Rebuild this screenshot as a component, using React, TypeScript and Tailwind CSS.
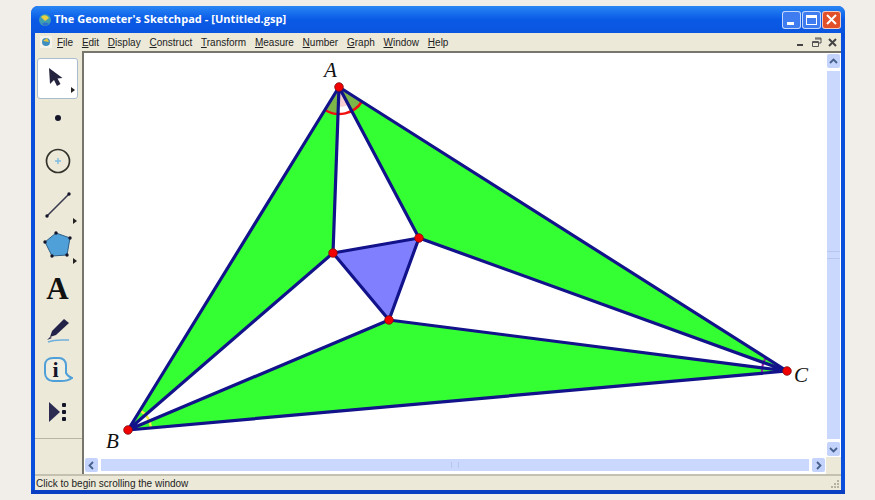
const menus = ["File", "Edit", "Display", "Construct", "Transform", "Measure", "Number", "Graph", "Window", "Help"];

function Triangle() {
  return <span className="absolute right-[1px] bottom-[1px] h-0 w-0 border-y-[3px] border-l-[4px] border-y-transparent border-l-[#222]" />;
}

function Tool({ className, children, more }: { className: string; children: React.ReactNode; more?: boolean }) {
  return (
    <div className={`relative flex w-[41px] items-center justify-center ${className}`}>
      {children}
      {more && <Triangle />}
    </div>
  );
}

function Toolbar() {
  return (
    <div className="flex w-[49px] shrink-0 flex-col items-center border-r-2 border-[#77766c] bg-[#ece9d8] pr-[2px]">
      <div className="relative mt-[7px] flex h-[41px] w-[41px] items-center justify-center rounded-[3px] border border-[#a9bdd0] bg-white">
        <svg className="mt-[-4px] mr-[3px]" width="18" height="22" viewBox="0 0 18 22">
          <path d="M2 2 L3 18 L7 14 L10 20 L13.5 18 L10.5 12.5 L15.5 12 Z" fill="#24243e" />
        </svg>
        <span className="absolute right-[2px] bottom-[5px] h-0 w-0 border-y-[3px] border-l-[4px] border-y-transparent border-l-[#222]" />
      </div>
      <Tool className="h-[38px]">
        <span className="h-[6px] w-[6px] rounded-full bg-[#15152a]" />
      </Tool>
      <Tool className="h-[48px]">
        <svg width="28" height="28" viewBox="0 0 28 28">
          <circle cx="14" cy="14" r="11.5" fill="none" stroke="#33332c" strokeWidth="1.7" />
          <path d="M14 11 V17 M11 14 H17" stroke="#7fbce0" strokeWidth="1.4" />
        </svg>
      </Tool>
      <Tool className="h-[40px]" more>
        <svg width="30" height="30" viewBox="0 0 30 30">
          <path d="M4 26 L26 4" stroke="#3a3a4e" strokeWidth="1.6" />
          <circle cx="4" cy="26" r="1.7" fill="#15152a" />
          <circle cx="26" cy="4" r="1.7" fill="#15152a" />
        </svg>
      </Tool>
      <Tool className="h-[40px]" more>
        <svg width="30" height="30" viewBox="0 0 30 30">
          <path d="M13 3 L27 8 L24 25 L9 26 L2 12 Z" fill="#4f9fd8" stroke="#2f5f88" strokeWidth="1" />
          <g fill="#15152a">
            <circle cx="13" cy="3" r="1.7" />
            <circle cx="27" cy="8" r="1.7" />
            <circle cx="24" cy="25" r="1.7" />
            <circle cx="9" cy="26" r="1.7" />
            <circle cx="2" cy="12" r="1.7" />
          </g>
        </svg>
      </Tool>
      <Tool className="h-[46px]">
        <span className="font-['Liberation_Serif',serif] text-[31px] leading-none font-bold text-[#111]">A</span>
      </Tool>
      <Tool className="h-[38px]">
        <svg width="26" height="26" viewBox="0 0 26 26">
          <path d="M19 2 L24 6 L11 18 L5 20 L7 14 Z" fill="#23234a" />
          <path d="M5 20 L2 23 L7 21 Z" fill="#23234a" />
          <path d="M3 25 C10 22 17 23 24 23" fill="none" stroke="#6fb0dc" strokeWidth="1.5" />
        </svg>
      </Tool>
      <Tool className="h-[44px]">
        <svg width="30" height="30" viewBox="0 0 30 30">
          <path d="M10 2 H16 C20 2 23 5 23 9 V17 C24 19 26 21 29 22 C26 24 22 25 18 25 H10 C5 25 2 21 2 17 V9 C2 5 5 2 10 2 Z" fill="#f0eee0" stroke="#4f9fd8" strokeWidth="2" />
          <text x="12.5" y="21" textAnchor="middle" className="font-['Liberation_Serif',serif] text-[22px] font-bold" fill="#15152a">i</text>
        </svg>
      </Tool>
      <Tool className="h-[38px]">
        <svg width="22" height="22" viewBox="0 0 22 22">
          <path d="M2 1 L13 11 L2 21 Z" fill="#2c2c52" />
          <g fill="#15152a">
            <rect x="15" y="2" width="4" height="4" rx="1" />
            <rect x="15" y="9" width="4" height="4" rx="1" />
            <rect x="15" y="16" width="4" height="4" rx="1" />
          </g>
        </svg>
      </Tool>
      <div className="mt-[7px] mr-[-2px] h-px w-[47px] bg-[#b8b5a3]" />
    </div>
  );
}

function Sketch() {
  return (
    <svg className="h-full w-full" viewBox="84 53 742 404">
      <g fill="#33ff33">
        <polygon points="339,87 128,430 333,253" />
        <polygon points="339,87 787,371 419,238" />
        <polygon points="128,430 787,371 389,320" />
      </g>
      <polygon points="333,253 419,238 389,320" fill="#8080ff" />
      <path d="M339 87 L325 110 A27 27 0 0 0 338 114 Z" fill="#7cb648" />
      <path d="M339 87 L351.6 111 A27 27 0 0 0 362 101.5 Z" fill="#7cb648" />
      <path d="M339 87 L338.3 107 A20 20 0 0 0 348.4 104.7 Z" fill="#f8d0d4" />
      <path d="M325 110 A27 27 0 0 0 362 101.5" fill="none" stroke="#f01010" strokeWidth="2.5" />
      <path d="M140 410.4 A23 23 0 0 1 151 428" fill="none" stroke="#f2f040" strokeWidth="2.5" />
      <path d="M765.9 357.6 A25 25 0 0 0 762.1 373.2" fill="none" stroke="#a020a0" strokeWidth="2" />
      <g stroke="#12128a" strokeWidth="3.2" strokeLinejoin="round" fill="none">
        <polygon points="339,87 128,430 787,371" />
        <polygon points="333,253 419,238 389,320" />
        <path d="M339 87 L333 253 L128 430 L389 320 L787 371 L419 238 L339 87" />
      </g>
      <g fill="#f00000" stroke="#801010" strokeWidth="0.8">
        <circle cx="339" cy="87" r="4.3" />
        <circle cx="128" cy="430" r="4.3" />
        <circle cx="787" cy="371" r="4.3" />
        <circle cx="333" cy="253" r="4.3" />
        <circle cx="419" cy="238" r="4.3" />
        <circle cx="389" cy="320" r="4.3" />
      </g>
      <g className="font-['Liberation_Serif',serif] text-[21px] italic" fill="#111">
        <text x="324" y="77">A</text>
        <text x="106" y="448">B</text>
        <text x="794" y="382">C</text>
      </g>
    </svg>
  );
}

function ScrollBtn({ d }: { d: string }) {
  return (
    <div className="flex h-[14px] w-[13px] shrink-0 items-center justify-center rounded-[2px] bg-[#c3d3fb]">
      <svg width="9" height="9" viewBox="0 0 9 9">
        <path d={d} fill="none" stroke="#46608c" strokeWidth="1.8" />
      </svg>
    </div>
  );
}

export default function App() {
  return (
    <div className="h-[500px] w-[875px] overflow-hidden bg-[#f1ede9] pt-[6px] pl-[31px] font-['Liberation_Sans',sans-serif]">
      <div className="flex h-[488px] w-[814px] flex-col overflow-hidden rounded-t-[7px] border-b-[4px] border-[#0a3fc4] bg-[#0a4fdc]">
        {/* title bar */}
        <div className="flex h-[27px] shrink-0 items-center bg-gradient-to-b from-[#2a86f4] via-[#0a5ae6] to-[#0a55e0] pr-[4px] pl-[7px]">
          <svg width="14" height="16" viewBox="0 0 14 16">
            <circle cx="7" cy="8" r="6" fill="#3f9fb0" />
            <path d="M3 5 C6 2 9 3 11 6 L7 9 Z" fill="#e8d040" />
            <path d="M4 12 C6 10 9 10 11 12 L7 14 Z" fill="#2f6fd0" />
          </svg>
          <span className="ml-[2px] font-['Open_Sans',sans-serif] text-[11px] font-bold tracking-[0.05px] text-white">The Geometer's Sketchpad - [Untitled.gsp]</span>
          <div className="ml-auto flex gap-[1px]">
            <div className="flex h-[18px] w-[19px] items-end rounded-[3px] border border-white/70 bg-[#3f7cf0] pb-[3px] pl-[4px]">
              <span className="h-[3px] w-[7px] bg-white" />
            </div>
            <div className="flex h-[18px] w-[19px] items-center justify-center rounded-[3px] border border-white/70 bg-[#3f7cf0]">
              <span className="h-[10px] w-[11px] border border-t-[3px] border-white" />
            </div>
            <div className="flex h-[18px] w-[19px] items-center justify-center rounded-[3px] border border-white/70 bg-[#e2502a]">
              <svg width="11" height="11" viewBox="0 0 11 11">
                <path d="M1 1 L10 10 M10 1 L1 10" stroke="#fff" strokeWidth="2" />
              </svg>
            </div>
          </div>
        </div>

        <div className="flex min-h-0 flex-1 flex-col border-x-[4px] border-[#0a4fdc] bg-[#ece9d8]">
          {/* menu bar */}
          <div className="flex h-[18px] shrink-0 items-center bg-[#ece9d8] pl-[5px] text-[10px] text-[#222]">
            <svg width="12" height="12" viewBox="0 0 12 12">
              <rect x="0" y="0" width="12" height="12" fill="#f5f3ea" />
              <circle cx="6" cy="6" r="4" fill="#3f8fc0" />
              <path d="M3 5 L7 2 L9 6 Z" fill="#e8c840" />
            </svg>
            <div className="ml-[5px] flex gap-[8.75px]">
              {menus.map((m) => (
                <span key={m}>
                  <span className="underline">{m[0]}</span>
                  {m.slice(1)}
                </span>
              ))}
            </div>
            <div className="ml-auto flex items-center gap-[5px] pr-[3px]">
              <svg width="11" height="11" viewBox="0 0 11 11">
                <path d="M2 8 H8" stroke="#444" strokeWidth="2" />
              </svg>
              <svg width="11" height="11" viewBox="0 0 11 11">
                <path d="M4 1 H10 V6 H8 M1.5 4.5 H7.5 V9.5 H1.5 Z M1.5 5.5 H7.5 M4 2 H10" fill="none" stroke="#555" strokeWidth="1" />
              </svg>
              <svg width="11" height="11" viewBox="0 0 11 11">
                <path d="M2 2 L9 9 M9 2 L2 9" stroke="#444" strokeWidth="2" />
              </svg>
            </div>
          </div>

          {/* work area */}
          <div className="flex min-h-0 flex-1">
            <Toolbar />
            <div className="flex min-w-0 flex-1 flex-col">
              <div className="flex min-h-0 flex-1 border-t-2 border-[#77766c] bg-white">
                <div className="min-w-0 flex-1">
                  <Sketch />
                </div>
                <div className="flex w-[15px] shrink-0 flex-col items-center gap-[3px] py-[1px]">
                  <ScrollBtn d="M1 6 L4.5 2.5 L8 6" />
                  <div className="flex w-[13px] flex-1 items-center justify-center bg-[#c9d8fc]">
                    <span className="h-[8px] w-[13px] border-y border-[#b6c6ee]" />
                  </div>
                  <ScrollBtn d="M1 3 L4.5 6.5 L8 3" />
                </div>
              </div>
              <div className="flex h-[17px] shrink-0 bg-[#ece9d8]">
                <div className="flex min-w-0 flex-1 items-center gap-[3px] bg-white pt-[1px] pr-[1px] pb-[2px] pl-[1px]">
                  <ScrollBtn d="M6 1 L2.5 4.5 L6 8" />
                  <div className="flex h-[12px] flex-1 items-center justify-center bg-[#c9d8fc]">
                    <span className="h-[6px] w-[8px] border-x border-[#b6c6ee]" />
                  </div>
                  <ScrollBtn d="M3 1 L6.5 4.5 L3 8" />
                </div>
                <div className="w-[15px] shrink-0" />
              </div>
            </div>
          </div>

          {/* status bar */}
          <div className="relative flex h-[16px] shrink-0 items-center border-t-2 border-[#c4c1b0] bg-[#ece9d8] pl-[1px] text-[10px] text-[#222]">
            Click to begin scrolling the window
            <svg className="absolute right-[1px] bottom-[1px]" width="10" height="10" viewBox="0 0 10 10">
              <g fill="#b5b29f">
                <rect x="7" y="1" width="2" height="2" />
                <rect x="4" y="4" width="2" height="2" />
                <rect x="7" y="4" width="2" height="2" />
                <rect x="1" y="7" width="2" height="2" />
                <rect x="4" y="7" width="2" height="2" />
                <rect x="7" y="7" width="2" height="2" />
              </g>
            </svg>
          </div>
        </div>
      </div>
    </div>
  );
}
